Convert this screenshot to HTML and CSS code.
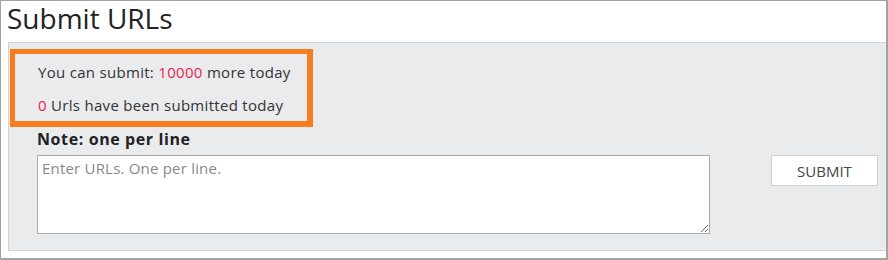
FILE: index.html
```html
<!DOCTYPE html>
<html>
<head>
<meta charset="utf-8">
<link rel="stylesheet" href="styles.css">
</head>
<body>
<div class="frame">
  <h1 class="title">Submit URLs</h1>
  <div class="panel">
    <div class="quota">
      <p class="line">You can submit: <span class="num">10000</span> more today</p>
      <p class="line line-second"><span class="num">0</span> Urls have been submitted today</p>
    </div>
    <div class="form">
      <label class="note" for="urls">Note: one per line</label>
      <div class="row">
        <textarea id="urls" class="urls" placeholder="Enter URLs. One per line."></textarea>
        <button class="submit" type="button">SUBMIT</button>
      </div>
    </div>
  </div>
</div>
</body>
</html>
```
FILE: styles.css
```css
html, body {
  margin: 0;
  padding: 0;
  background: #fff;
}
body {
  font-family: "Open Sans", "Noto Sans", sans-serif;
  color: #333;
}
.frame {
  box-sizing: border-box;
  width: 888px;
  height: 260px;
  border: 1px solid #a3a3a3;
  border-right-width: 2px;
  border-bottom-width: 2px;
  overflow: hidden;
}
.title {
  margin: 0;
  padding: 2px 0 0 6px;
  height: 31px;
  font-size: 28px;
  line-height: 30px;
  font-weight: 400;
  color: #222;
}
.panel {
  margin: 8px 0 0 7px;
  border: 1px solid #d3d3d3;
  border-right: none;
  background: #eaebed;
  padding: 0 8px 16px 0;
}
.quota {
  box-sizing: border-box;
  width: 303px;
  margin: 6px 0 0 1px;
  border: 6px solid #f97c1f;
  border-left-width: 5px;
  border-top-width: 5px;
  padding: 8px 0 6px 23px;
}
.line {
  margin: 0;
  font-size: 15px;
  letter-spacing: 0.3px;
  line-height: 20px;
}
.line-second {
  margin-top: 13px;
}
.num {
  color: #ee1d52;
}
.form {
  margin-left: 28px;
}
.note {
  display: block;
  margin-top: 2px;
  font-size: 16px;
  letter-spacing: 0.6px;
  line-height: 20px;
  font-weight: 700;
  color: #222;
}
.row {
  display: flex;
  justify-content: space-between;
  align-items: flex-start;
  margin-top: 6px;
}
.urls {
  box-sizing: border-box;
  width: 673px;
  height: 79px;
  margin: 0;
  border: 1px solid #a9a9a9;
  padding: 2px 4px;
  font-family: "Open Sans", "Noto Sans", sans-serif;
  font-size: 15px;
  letter-spacing: 0.2px;
  line-height: 20px;
  color: #333;
  background: #fff;
  resize: vertical;
}
.urls::placeholder {
  color: #888;
}
.submit {
  box-sizing: border-box;
  width: 107px;
  height: 31px;
  margin: 0;
  border: 1px solid #cfcfcf;
  background: #fff;
  font-family: "Open Sans", "Noto Sans", sans-serif;
  font-size: 15px;
  color: #444;
  padding: 0;
}
```
